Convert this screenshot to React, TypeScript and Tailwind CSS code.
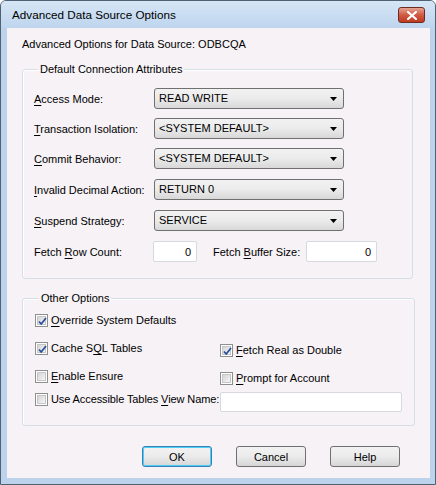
import React from "react";

const font = { fontFamily: '"Liberation Sans", Arial, sans-serif' };

function U({ c }: { c: string }) {
  return <span className="underline underline-offset-[2px]">{c}</span>;
}

function Combo({ value }: { value: string }) {
  return (
    <div className="flex h-[21px] w-[190px] items-center justify-between rounded-[3px] border border-[#707070] bg-gradient-to-b from-[#f2f2f2] via-[#ebebeb] to-[#d8d8d8] pl-[4px] pr-[6px]">
      <span className="text-[11px] leading-none text-black">{value}</span>
      <svg width="7" height="4" viewBox="0 0 7 4">
        <path d="M0 0H7L3.5 4Z" fill="#000" />
      </svg>
    </div>
  );
}

function Check({ checked }: { checked: boolean }) {
  return (
    <div className="relative h-[13px] w-[13px] shrink-0 border border-[#8e8f8f] bg-white p-[1px]">
      <div className="h-full w-full border border-[#c6c6c6] bg-gradient-to-br from-[#d4d4d4] to-[#f6f6f6]" />
      {checked && (
        <svg className="absolute left-[1px] top-[1px]" width="11" height="11" viewBox="0 0 11 11">
          <path d="M2 5.5L4.2 8L9 2" stroke="#2a4f9b" strokeWidth="1.8" fill="none" strokeLinejoin="round" />
        </svg>
      )}
    </div>
  );
}

function Input({ w, value }: { w: string; value?: string }) {
  return (
    <div className={`flex h-[21px] items-center justify-end rounded-[2px] border border-[#d6d9dd] bg-white pr-[5px] text-[11px] ${w}`}>
      {value}
    </div>
  );
}

function Btn({ label, focus }: { label: string; focus?: boolean }) {
  return (
    <div
      className={`flex h-[21px] w-[70px] items-center justify-center rounded-[3px] border bg-gradient-to-b from-[#f2f2f2] via-[#ebebeb] to-[#d6d6d6] text-[11px] ${
        focus ? "border-[#3c7fb1] shadow-[inset_0_0_0_1px_#48d0f8]" : "border-[#707070]"
      }`}
    >
      {label}
    </div>
  );
}

export default function App() {
  const rows: [React.ReactNode, string][] = [
    [<><U c="A" />ccess Mode:</>, "READ WRITE"],
    [<><U c="T" />ransaction Isolation:</>, "<SYSTEM DEFAULT>"],
    [<><U c="C" />ommit Behavior:</>, "<SYSTEM DEFAULT>"],
    [<><U c="I" />nvalid Decimal Action:</>, "RETURN 0"],
    [<><U c="S" />uspend Strategy:</>, "SERVICE"],
  ];
  return (
    <div className="h-[485px] w-[436px] whitespace-nowrap bg-white" style={font}>
      <div className="flex h-[485px] w-[436px] flex-col rounded-t-[6px] border border-[#4f6273] bg-[#bdd3ec]">
        <div className="flex h-[27px] shrink-0 items-center justify-between rounded-t-[5px] bg-gradient-to-b from-[#d6e6f6] to-[#bed5ee] pl-[11px] pr-[10px]">
          <span className="text-[11.7px] text-black">Advanced Data Source Options</span>
          <div className="mt-[1px] flex h-[16px] w-[27px] items-center justify-center rounded-[3px] border border-[#6d2b22] bg-gradient-to-b from-[#e6a394] via-[#cf5a42] to-[#c03a1f]">
            <svg width="10" height="9" viewBox="0 0 10 9">
              <path d="M1 1L9 8M9 1L1 8" stroke="#fff" strokeWidth="2.2" strokeLinecap="square" />
            </svg>
          </div>
        </div>
        <div className="ml-[6px] mr-[5px] flex h-[450px] flex-col bg-[#f6f2f6] px-[15px] text-[11px] leading-[14px] text-black">
          <div className="mt-[9px] h-[15px] leading-[15px]">Advanced Options for Data Source: ODBCQA</div>
          <fieldset className="mt-[10px] h-[217px] w-[391px] rounded-[3px] border border-[#d5dfe5] px-[11px] shadow-[inset_1px_1px_0_#fff]">
            <legend className="ml-[4px] px-[2px] leading-[14px]">Default Connection Attributes</legend>
            <div className="mt-[12px] flex flex-col gap-[9px]">
              {rows.map(([l, v], i) => (
                <div key={i} className={`flex items-center ${i >= 3 ? "mt-[1px]" : ""}`}>
                  <div className="w-[120px]">{l}</div>
                  <Combo value={v} />
                </div>
              ))}
            </div>
            <div className="mt-[10px] flex items-center">
              <div className="w-[119px]">Fetch <U c="R" />ow Count:</div>
              <Input w="w-[44px]" value="0" />
              <div className="ml-[16px] w-[93px]">Fetch <U c="B" />uffer Size:</div>
              <Input w="w-[71px]" value="0" />
            </div>
          </fieldset>
          <fieldset className="mt-[12px] h-[135px] w-[391px] rounded-[3px] border border-[#d5dfe5] px-[12px] shadow-[inset_1px_1px_0_#fff]">
            <legend className="ml-[4px] px-[2px] leading-[14px]">Other Options</legend>
            <div className="mt-[8px] flex items-center gap-[3px]">
              <Check checked />
              <span><U c="O" />verride System Defaults</span>
            </div>
            <div className="mt-[14px] flex items-start">
              <div className="flex w-[185px] flex-col gap-[14px]">
                <div className="flex items-center gap-[3px]">
                  <Check checked />
                  <span>Cache S<U c="Q" />L Tables</span>
                </div>
                <div className="flex items-center gap-[3px]">
                  <Check checked={false} />
                  <span><U c="E" />nable Ensure</span>
                </div>
              </div>
              <div className="mt-[2px] flex flex-col gap-[14px]">
                <div className="flex items-center gap-[3px]">
                  <Check checked />
                  <span><U c="F" />etch Real as Double</span>
                </div>
                <div className="flex items-center gap-[3px]">
                  <Check checked={false} />
                  <span><U c="P" />rompt for Account</span>
                </div>
              </div>
            </div>
            <div className="mt-[7px] flex items-start">
              <div className="flex w-[185px] items-center gap-[3px]">
                <Check checked={false} />
                <span className="relative z-10 tracking-[-0.1px]">Use Accessible Tables <U c="V" />iew Name:</span>
              </div>
              <div className="h-[20px] w-[182px] rounded-[2px] border border-[#d6d9dd] bg-white" />
            </div>
          </fieldset>
          <div className="mt-[20px] flex gap-[24px] pl-[120px]">
            <Btn label="OK" focus />
            <Btn label="Cancel" />
            <Btn label="Help" />
          </div>
        </div>
      </div>
    </div>
  );
}
